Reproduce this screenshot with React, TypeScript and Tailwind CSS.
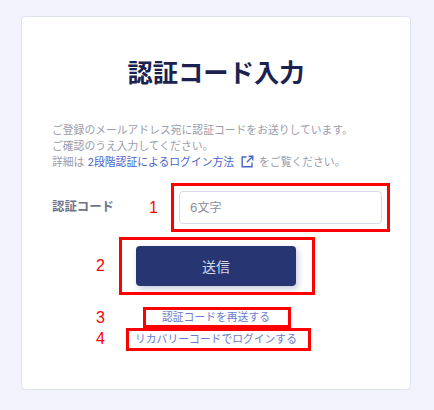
import React from 'react';

const font = { fontFamily: 'Inter, "Noto Sans CJK JP", sans-serif' };

const ExternalIcon: React.FC = () => (
  <svg className="ml-[7px] mr-[5px] inline-block h-[13px] w-[13px] align-[-2px] text-[#4a63c8]" viewBox="0 0 13 13" fill="none" stroke="currentColor" strokeWidth="1.4" aria-hidden="true">
    <path d="M5.5 2H1.2v9.8H11V7.5" />
    <path d="M7.6 1.2h4.2v4.2" />
    <path d="M11.6 1.4 5.8 7.2" />
  </svg>
);

const Marker: React.FC<{ className: string }> = ({ className }) => (
  <div className={`pointer-events-none absolute border-[3px] border-[#f00] ${className}`} />
);

const Num: React.FC<{ className: string; children: React.ReactNode }> = ({ className, children }) => (
  <span className={`absolute text-[16px] leading-none text-[#f00] ${className}`} style={{ fontFamily: '"Liberation Sans", sans-serif' }}>
    {children}
  </span>
);

const App: React.FC = () => {
  return (
    <div className="relative flex h-[410px] w-[434px] items-start justify-center overflow-hidden bg-[#f2f3fc] pr-[2px] pt-[16px]" style={font}>
      <div className="flex h-[374px] w-[390px] flex-col rounded-[4px] border border-[#dfe2f0] bg-white px-[30px] pt-[38px]">
        <h1 className="text-center text-[25.3px] font-bold leading-[36px] text-[#1b2250]">認証コード入力</h1>

        <p className="mt-[32px] text-[10.8px] leading-[16px] text-[#9a9cac]">
          ご登録のメールアドレス宛に認証コードをお送りしています。
          <br />
          ご確認のうえ入力してください。
          <br />
          詳細は <span className="text-[#4a63c8]">2段階認証によるログイン方法</span>
          <ExternalIcon />
          をご覧ください。
        </p>

        <div className="mt-[20px] flex items-center">
          <label className="w-[126px] shrink-0 text-[12.4px] font-bold text-[#6f7388]">認証コード</label>
          <input
            className="ml-[1px] h-[33px] w-[203px] rounded-[4px] border border-[#d5daec] bg-white px-[10px] text-[12px] placeholder:text-[#8a8d9e]"
            placeholder="6文字"
            style={font}
          />
        </div>

        <div className="mt-[22px] flex justify-center">
          <button className="h-[40px] w-[160px] rounded-[4px] bg-[#273673] text-[14px] text-[#d4d8e8] shadow-[2px_3px_6px_rgba(39,54,115,0.25)]">
            送信
          </button>
        </div>

        <div className="mt-[24px] flex flex-col items-center gap-[6px] text-[10.8px] leading-[16px] text-[#6b7bcb]">
          <a>認証コードを再送する</a>
          <a>リカバリーコードでログインする</a>
        </div>
      </div>

      <Marker className="left-[171px] top-[183px] h-[49px] w-[219px]" />
      <Marker className="left-[119px] top-[237px] h-[58px] w-[196px]" />
      <Marker className="left-[143px] top-[307px] h-[21px] w-[148px]" />
      <Marker className="left-[126px] top-[328px] h-[23px] w-[185px]" />
      <Num className="left-[149px] top-[200px]">1</Num>
      <Num className="left-[96px] top-[258px]">2</Num>
      <Num className="left-[96px] top-[310px]">3</Num>
      <Num className="left-[96px] top-[331px]">4</Num>
    </div>
  );
};

export default App;
